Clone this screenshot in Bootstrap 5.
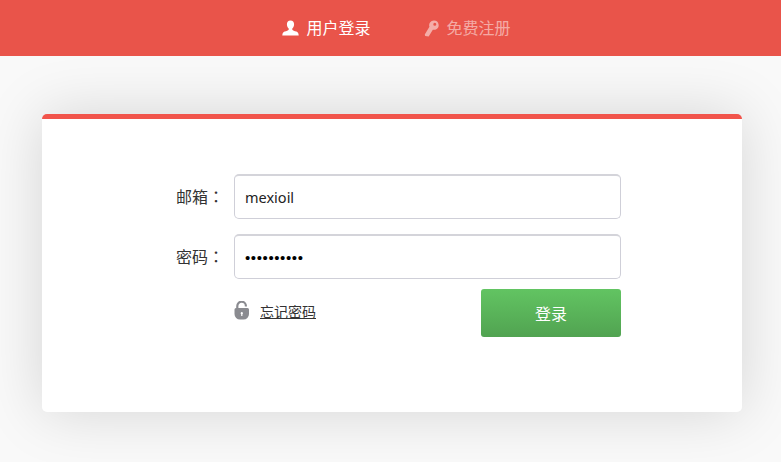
<!DOCTYPE html>
<html lang="zh-CN">
<head>
<meta charset="utf-8">
<title>用户登录</title>
<link rel="stylesheet" href="https://cdn.jsdelivr.net/npm/bootstrap@5.3.0/dist/css/bootstrap.min.css">
<style>
html,body{height:462px;overflow:hidden}
body{background:#f9f9f9;font-family:"Noto Sans","Noto Sans CJK SC",sans-serif;font-size:15px;color:#333}
.topbar{height:56px;background:#e9544a;gap:53px;padding-left:12px}
.toplink{color:#fff;font-size:16px;line-height:56px;text-decoration:none;gap:7px}
.toplink.dim{color:rgba(255,255,255,.52);gap:8px}
.pagewrap{padding:58px 39px 0 42px}
.panel{height:298px;background:#fff;border-top:5px solid #f1544b;border-radius:5px;box-shadow:0 0 60px rgba(0,0,0,.15);padding:55px 121px 0 0}
.lab{width:192px;padding-right:10px;text-align:right;font-size:16px;color:#333;margin:0}
.colon{font-family:"Noto Sans CJK TC",sans-serif}
.fld{width:387px;height:45px;padding:0 10px;border:1px solid #cfcfd8;border-top:2px solid #d4d4da;border-radius:5px;font-size:14.5px;color:#222;box-shadow:none;font-family:"Noto Sans",sans-serif}
.rowgap{margin-bottom:15px}
.pw{font-family:"Liberation Sans",sans-serif;font-size:15px;letter-spacing:.6px;color:#000}
.forgot{color:#333;font-size:14px;text-decoration:underline;gap:10px;padding-top:7px;margin-left:192px}
.forgot svg{margin-top:-3px}
.submitbtn{width:140px;height:48px;margin-top:-5px;padding-top:8px;border:0;border-radius:3px;color:#fff;font-size:16px;background:linear-gradient(#62c462,#51a351)}
.submitbtn:hover{color:#fff}
</style>
</head>
<body>
<nav class="topbar d-flex justify-content-center align-items-center">
  <a class="toplink d-flex align-items-center" href="#">
    <svg width="17" height="16" viewBox="0 0 18 16"><path fill="#fff" d="M9 0c2.400 0 3.800 1.600 3.800 4 0 1.900-.8 3.500-1.900 4.500v1.300c.6.800 2.300 1.200 4.300 2 1.400.6 2.300 1.300 2.500 4.200H.3c.2-2.900 1.100-3.600 2.500-4.200 2-.8 3.700-1.200 4.300-2V8.500C6 7.500 5.200 5.900 5.200 4 5.200 1.600 6.600 0 9 0z"/></svg>
    <span>用户登录</span></a>
  <a class="toplink dim d-flex align-items-center" href="#">
    <svg width="15" height="17" viewBox="0 0 16 18"><path fill="#fff" fill-opacity=".52" fill-rule="evenodd" d="M10.500.5a5 5 0 0 1 1.500 9.800 5 5 0 0 1-2.600-.1L5 17.500l-3.700-.4-.5-1.600 5-8.300a5 5 0 0 1 4.700-6.700zm1 2.300a1.600 1.600 0 1 0 0 3.200 1.600 1.600 0 0 0 0-3.200z"/></svg>
    <span>免费注册</span></a>
</nav>
<main class="pagewrap">
  <section class="panel">
    <form>
      <div class="d-flex align-items-center rowgap">
        <label class="lab" for="em">邮箱<span class="colon" lang="zh-TW">：</span></label>
        <input id="em" class="form-control fld" type="text" value="mexioil">
      </div>
      <div class="d-flex align-items-center rowgap">
        <label class="lab" for="pw">密码<span class="colon" lang="zh-TW">：</span></label>
        <input id="pw" class="form-control fld pw" type="password" value="mexioil123">
      </div>
      <div class="d-flex justify-content-between align-items-start">
        <a class="forgot d-flex align-items-center" href="#">
          <svg width="16" height="19" viewBox="0 0 16 19"><path fill="none" stroke="#8a8b90" stroke-width="2.200" d="M3.300 8V5a4.300 4.300 0 0 1 8.600 0V5.500"/><path fill="#8a8b90" fill-rule="evenodd" d="M2 7h11.500A1.500 1.500 0 0 1 15 8.500V13a5.500 5.500 0 0 1-5.500 5.500H6A5.500 5.500 0 0 1 .5 13V8.500A1.500 1.500 0 0 1 2 7zM7.800 11a1.200 1.200 0 0 0-.6 2.200V15h1.200v-1.800A1.200 1.200 0 0 0 7.800 11z"/></svg>
          <span>忘记密码</span></a>
        <button type="button" class="btn submitbtn">登录</button>
      </div>
    </form>
  </section>
</main>
<script src="https://cdn.jsdelivr.net/npm/bootstrap@5.3.0/dist/js/bootstrap.bundle.min.js"></script>
</body>
</html>
